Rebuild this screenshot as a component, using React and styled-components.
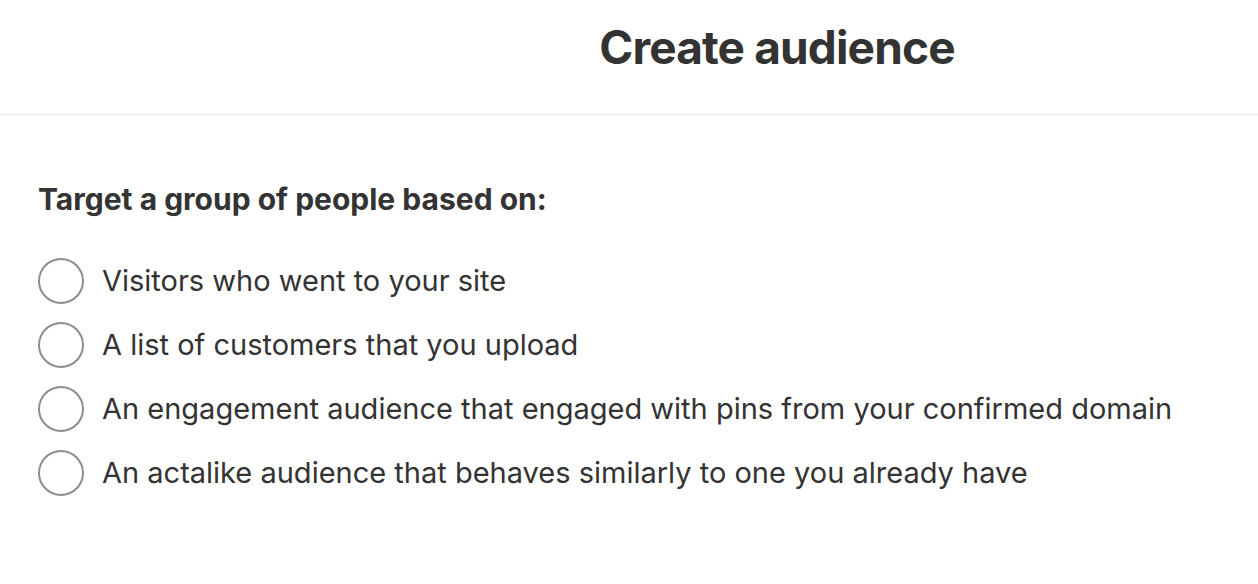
import React from 'react';
import styled, { createGlobalStyle } from 'styled-components';

const GlobalStyle = createGlobalStyle`
  html, body {
    margin: 0;
    padding: 0;
    background: #fff;
  }
  body {
    font-family: Inter, "Liberation Sans", sans-serif;
    color: #333;
  }
`;

const Page = styled.div`
  width: 1258px;
  height: 584px;
  overflow: hidden;
  background: #fff;
`;

const Header = styled.header`
  height: 115px;
  border-bottom: 1.5px solid #e9e9e9;
  display: flex;
  align-items: center;
  justify-content: center;
  padding-left: 296px;
  box-sizing: border-box;
`;

const Title = styled.h1`
  margin: 0 0 20px;
  font-size: 46px;
  line-height: 56px;
  font-weight: 700;
  letter-spacing: -0.85px;
  color: #333;
`;

const Body = styled.section`
  padding: 66px 38px 0;
`;

const Question = styled.h2`
  margin: 0 0 41px;
  font-size: 30px;
  line-height: 36px;
  font-weight: 700;
  letter-spacing: 0;
  color: #333;
`;

const Options = styled.div`
  display: flex;
  flex-direction: column;
  gap: 18px;
`;

const Option = styled.label`
  display: flex;
  align-items: center;
  gap: 18px;
  cursor: pointer;
`;

const Radio = styled.input.attrs({ type: 'radio' })`
  appearance: none;
  margin: 0;
  width: 46px;
  height: 46px;
  border-radius: 50%;
  border: 2px solid #8e8e8e;
  box-sizing: border-box;
  flex-shrink: 0;
  cursor: pointer;
`;

const OptionText = styled.span`
  font-size: 29px;
  line-height: 36px;
  font-weight: 400;
  color: #333;
`;

const options = [
  'Visitors who went to your site',
  'A list of customers that you upload',
  'An engagement audience that engaged with pins from your confirmed domain',
  'An actalike audience that behaves similarly to one you already have',
];

export default function App() {
  return (
    <Page>
      <GlobalStyle />
      <Header>
        <Title>Create audience</Title>
      </Header>
      <Body>
        <Question>Target a group of people based on:</Question>
        <Options>
          {options.map((o) => (
            <Option key={o}>
              <Radio name="audience" />
              <OptionText>{o}</OptionText>
            </Option>
          ))}
        </Options>
      </Body>
    </Page>
  );
}
